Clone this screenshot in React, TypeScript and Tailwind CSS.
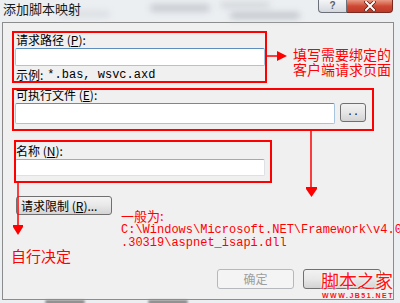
import React from "react";

const cjk = { fontFamily: '"Noto Sans CJK SC", "Noto Sans", sans-serif' };
const mono = { fontFamily: '"Liberation Mono", "Noto Sans CJK SC", monospace' };

function Label({ text, k }: { text: string; k: string }) {
  return (
    <div className="text-[12px] leading-[14px] text-black" style={cjk}>
      {text} (<u>{k}</u>):
    </div>
  );
}

export default function App() {
  return (
    <div className="relative w-[400px] h-[303px] overflow-hidden bg-[#eceff2]" style={cjk}>
      {/* title bar */}
      <div className="relative flex h-[22px] items-start justify-between">
        <div className="absolute left-[150px] top-[4px] h-[8px] w-[60px] rounded-full bg-[#c9cdd2] blur-[3px]" />
        <div className="absolute left-[220px] top-[2px] h-[6px] w-[50px] rounded-full bg-[#d3d6da] blur-[3px]" />
        <div className="absolute left-[230px] top-[12px] h-[7px] w-[70px] rounded-full bg-[#c4c8cd] blur-[3px]" />
        <div className="absolute left-[60px] top-[10px] h-[8px] w-[50px] rounded-full bg-[#dde0e4] blur-[3px]" />
        <div className="relative pl-[3px] pt-[1px] text-[13px] leading-[16px] text-[#1a1a1a]">添加脚本映射</div>
        <div className="relative mr-[7px] flex">
          <div className="flex h-[13px] w-[29px] items-center justify-center rounded-bl-[4px] border border-t-0 border-[#6b7079] bg-gradient-to-b from-[#f4f5f7] to-[#d4d8de] text-[10px] font-bold leading-[10px] text-[#59606a]" style={{ fontFamily: '"Liberation Sans", sans-serif' }}>
            ?
          </div>
          <div className="flex h-[13px] w-[46px] items-center justify-center rounded-br-[4px] border border-l-0 border-t-0 border-[#7a2a20] bg-gradient-to-b from-[#e79a86] via-[#cf4a33] to-[#c0392b]">
            <svg width="12" height="10" viewBox="0 0 12 10">
              <path d="M2 1 L10 9 M10 1 L2 9" stroke="#5a1a12" strokeWidth="3.4" strokeLinecap="square" />
              <path d="M2 1 L10 9 M10 1 L2 9" stroke="#ffffff" strokeWidth="2" strokeLinecap="square" />
            </svg>
          </div>
        </div>
      </div>

      {/* dialog body */}
      <div className="ml-[2px] flex h-[278px] w-[392px] flex-col border border-[#8c8c8c] bg-[#f0f0f0]">
        <div className="ml-[13px] mt-[10px]">
          <Label text="请求路径" k="P" />
        </div>
        <div className="ml-[12px] mt-[1px] h-[18px] w-[250px] rounded-[2px] border border-[#a9c4de] border-t-[#5d8fbe] bg-white" />
        <div className="ml-[13px] mt-[2px] flex text-[12px] leading-[14px] text-black">
          <span style={cjk}>示例:</span>
          <span className="ml-[4px]" style={mono}>*.bas, wsvc.axd</span>
        </div>

        <div className="ml-[13px] mt-[6px]">
          <Label text="可执行文件" k="E" />
        </div>
        <div className="mt-[1px] flex items-start">
          <div className="ml-[12px] h-[21px] w-[320px] rounded-[2px] border border-[#a9c4de] border-t-[#5d8fbe] bg-white" />
          <div className="ml-[5px] flex h-[19px] w-[26px] items-end justify-center rounded-[3px] border border-[#707070] bg-gradient-to-b from-[#f2f2f2] via-[#e6e6e6] to-[#d3d3d3] pb-[3px] text-[10px] leading-[10px] text-black" style={mono}>
            ..
          </div>
        </div>

        <div className="ml-[13px] mt-[20px]">
          <Label text="名称" k="N" />
        </div>
        <div className="ml-[12px] mt-[1px] h-[17px] w-[250px] rounded-[2px] border border-[#dfe0e4] border-t-[#a8a9ae] bg-white" />

        <div className="ml-[13px] mt-[20px] flex h-[19px] w-[96px] items-center rounded-[3px] border border-[#707070] bg-gradient-to-b from-[#f4f4f4] via-[#e8e8e8] to-[#d4d4d4] pl-[4px] text-[12px] leading-[14px] text-black">
          请求限制 (<u>R</u>)...
        </div>

        <div className="mb-[10px] mr-[12px] mt-auto flex justify-end gap-[9px]">
          <div className="flex h-[20px] w-[77px] items-center justify-center rounded-[3px] border border-[#b5b9bd] bg-[#f4f4f4] text-[12px] text-[#9e9e9e]">
            确定
          </div>
          <div className="h-[20px] w-[78px] rounded-[3px] border border-[#707070] bg-gradient-to-b from-[#f2f2f2] via-[#e8e8e8] to-[#d3d3d3]" />
        </div>
      </div>

      {/* bottom shadow smudges */}
      <div className="absolute left-[45px] top-[300px] h-[4px] w-[40px] rounded-full bg-[#8a8a8a] blur-[1px]" />
      <div className="absolute left-[148px] top-[300px] h-[4px] w-[40px] rounded-full bg-[#8a8a8a] blur-[1px]" />

      {/* annotations */}
      <div className="pointer-events-none absolute left-[12px] top-[31px] h-[52px] w-[255px] border-2 border-[#ff0000]" />
      <div className="pointer-events-none absolute left-[12px] top-[88px] h-[43px] w-[362px] border-2 border-[#ff0000]" />
      <div className="pointer-events-none absolute left-[14px] top-[140px] h-[43px] w-[258px] border-2 border-[#ff0000]" />

      <svg className="absolute left-0 top-0" width="400" height="303">
        <line x1="267" y1="56" x2="279" y2="56" stroke="#ff0000" strokeWidth="1.5" />
        <path d="M277 51 L287 56 L277 61 Z" fill="#ff0000" />
        <line x1="311" y1="131" x2="311" y2="188" stroke="#ff0000" strokeWidth="1.5" />
        <path d="M306 187 L317 187 L317 189 L311.5 197 L306 189 Z" fill="#ff0000" />
        <line x1="18" y1="183" x2="18" y2="226" stroke="#ff0000" strokeWidth="1.5" />
        <path d="M13 225 L23 225 L23 227 L18 235 L13 227 Z" fill="#ff0000" />
      </svg>

      <div className="absolute left-[293px] top-[47px] text-[14px] leading-[15px] text-[#ff0000]">
        <div>填写需要绑定的</div>
        <div>客户端请求页面</div>
      </div>

      <div className="absolute left-[121px] top-[209px] text-[13px] leading-[14px] text-[#ff0000]">一般为:</div>
      <div className="absolute left-[121px] top-[224px] whitespace-pre text-[12px] leading-[13px] text-[#ff0000]" style={mono}>
        <div>C:\Windows\Microsoft.NET\Framework\v4.0</div>
        <div>.30319\aspnet_isapi.dll</div>
      </div>

      <div className="absolute left-[11px] top-[247px] text-[15px] leading-[18px] text-[#ff0000]">自行决定</div>

      {/* watermark */}
      <div className="absolute left-[321px] top-[269px] text-[18px] leading-[22px] text-[#ff1010]" style={{ textShadow: "0 0 2px #fff, 0 0 2px #fff" }}>
        脚本之家
      </div>
      <div className="absolute left-[322px] top-[292px] text-[7px] font-bold leading-[8px] tracking-[1.5px] text-[#ff1010]" style={{ fontFamily: '"Liberation Sans", sans-serif' }}>
        WWW.JB51.NET
      </div>
    </div>
  );
}
